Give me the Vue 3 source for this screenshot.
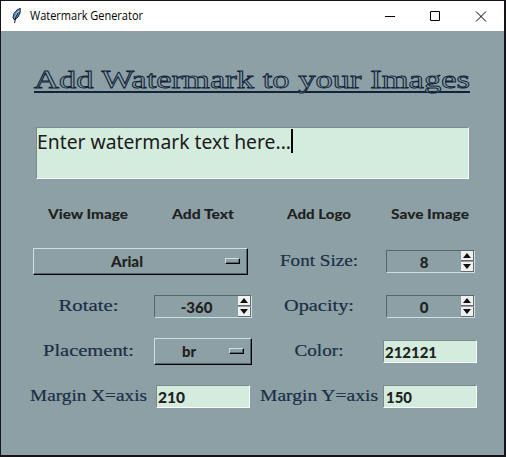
<script setup>
import { ref } from 'vue'

const actions = ref([
  { text: 'View Image', width: 80 },
  { text: 'Add Text', width: 62 },
  { text: 'Add Logo', width: 64 },
  { text: 'Save Image', width: 78 },
])
</script>

<template>
  <main class="window">
    <header class="titlebar">
      <svg class="feather" width="12" height="18" viewBox="0 0 12 18">
        <path d="M3 12.5 2 10.5 3 6.5 6 3 9.3 1.4 9 6 7 10 4 12.6Z" fill="#5b92d8" stroke="#18202b" stroke-width="1" />
        <path d="M8 3.5 5.8 6.8 4.4 10.5" stroke="#c4e0fa" fill="none" />
        <path d="M7.3 5.5 4.6 10.5 3.6 16" stroke="#111" fill="none" />
      </svg>
      <svg class="caption" width="114" height="20"><text x="0" y="14" textLength="113" lengthAdjust="spacingAndGlyphs">Watermark Generator</text></svg>
      <svg class="controls" width="104" height="11" viewBox="0 0 104 11" fill="none" stroke="#000">
        <path d="M0 5.5h10M45.5 .5h9v9h-9zM91 .5l10 10M101 .5l-10 10" />
      </svg>
    </header>

    <section class="body">
      <h1 class="heading">
        <svg width="436" height="34"><text x="0" y="23" textLength="436" lengthAdjust="spacingAndGlyphs">Add Watermark to your Images</text></svg>
      </h1>

      <div class="textbox">
        <svg width="253" height="24"><text x="-1" y="20" textLength="254" lengthAdjust="spacingAndGlyphs">Enter watermark text here...</text></svg>
        <i class="caret"></i>
      </div>

      <div class="grid">
        <button v-for="a in actions" :key="a.text" class="action">
          <svg :width="a.width" height="21"><text x="0" y="13" :textLength="a.width" lengthAdjust="spacingAndGlyphs">{{ a.text }}</text></svg>
        </button>

        <div class="menu wide">
          <svg width="31" height="21"><text x="-1" y="15.5" textLength="32" lengthAdjust="spacingAndGlyphs">Arial</text></svg>
          <i class="indicator"></i>
        </div>
        <svg class="label" width="78" height="21"><text x="0" y="14.5" textLength="78" lengthAdjust="spacingAndGlyphs">Font Size:</text></svg>
        <div class="spin narrow">
          <span class="value">8</span>
          <span class="arrows"><i class="up"></i><i class="down"></i></span>
        </div>

        <svg class="label" width="60" height="21"><text x="-.5" y="14.5" textLength="60" lengthAdjust="spacingAndGlyphs">Rotate:</text></svg>
        <div class="spin">
          <span class="value">-360</span>
          <span class="arrows"><i class="up"></i><i class="down"></i></span>
        </div>
        <svg class="label" width="70" height="21"><text x="0" y="14.5" textLength="70" lengthAdjust="spacingAndGlyphs">Opacity:</text></svg>
        <div class="spin narrow">
          <span class="value">0</span>
          <span class="arrows"><i class="up"></i><i class="down"></i></span>
        </div>

        <svg class="label" width="91" height="21"><text x="0" y="14.5" textLength="91" lengthAdjust="spacingAndGlyphs">Placement:</text></svg>
        <div class="menu">
          <svg width="14" height="21"><text x="0" y="15.5" textLength="14" lengthAdjust="spacingAndGlyphs">br</text></svg>
          <i class="indicator"></i>
        </div>
        <svg class="label" width="49" height="21"><text x="-.5" y="14.5" textLength="49" lengthAdjust="spacingAndGlyphs">Color:</text></svg>
        <div class="entry"><svg width="52" height="20"><text x="-1" y="15.5" textLength="52" lengthAdjust="spacingAndGlyphs">212121</text></svg></div>

        <svg class="label" width="117" height="21"><text x="0" y="14.5" textLength="117" lengthAdjust="spacingAndGlyphs">Margin X=axis</text></svg>
        <div class="entry"><svg width="27" height="20"><text x="-1" y="15.5" textLength="27" lengthAdjust="spacingAndGlyphs">210</text></svg></div>
        <svg class="label" width="118" height="21"><text x="0" y="14.5" textLength="118" lengthAdjust="spacingAndGlyphs">Margin Y=axis</text></svg>
        <div class="entry"><svg width="26" height="20"><text x="0" y="15.5" textLength="26" lengthAdjust="spacingAndGlyphs">150</text></svg></div>
      </div>
    </section>
  </main>
</template>

<style>
body { background: #111; }
</style>

<style scoped>
* { box-sizing: border-box; }
svg { display: block; overflow: visible; flex: none; }
.window {
  width: 506px;
  height: 457px;
  border: solid #151318;
  border-width: 1px 2px 2px 1px;
  background: #8ca0a5;
  font-family: Lato, "Liberation Sans", sans-serif;
}
.titlebar {
  height: 30px;
  padding: 0 17px 0 10px;
  display: flex;
  align-items: center;
  background: #fff;
}
.caption { margin-left: 7px; font: 12px "Open Sans", "Noto Sans", sans-serif; }
.controls { margin-left: auto; margin-right: -2px; }
.body { padding: 34px 0 0 27px; }
.heading {
  width: 436px;
  height: 28px;
  margin: 0 0 0 6px;
  border-bottom: 2px solid #10243a;
  font: 26px "Liberation Serif", serif;
}
.heading svg { fill: #8ca0a5; stroke: #10223a; stroke-width: .85px; }
.textbox {
  display: flex;
  width: 433px;
  height: 52px;
  margin: 34px 0 15px 8px;
  padding: 1px;
  border: 1px solid #fff;
  border-top-color: #798b87;
  border-left-color: #798b87;
  background: #d4ecdd;
  font: 20.5px "Noto Sans", sans-serif;
  fill: #1b1b1b;
}
.caret { width: 2px; height: 24px; background: #000; }
.grid {
  display: grid;
  grid-template-columns: 121px 108px 124px 98px;
  grid-auto-rows: 45px;
  place-items: center;
}
.action {
  padding: 0;
  border: 0;
  background: none;
  font: 900 14px Lato, sans-serif;
  fill: #212121;
}
.action:first-child { margin-right: 1px; }
.label {
  font: 17px "Liberation Serif", serif;
  fill: #1b2e46;
  stroke: #1b2e46;
  stroke-width: .2px;
}
.menu {
  display: flex;
  align-items: center;
  justify-content: space-between;
  width: 98px;
  height: 27px;
  padding: 0 7px 0 27px;
  border: 1px solid #000;
  border-top-color: #c8e2e6;
  border-left-color: #c8e2e6;
  box-shadow: inset -1px -1px #53646a;
  font: 900 15px Lato, sans-serif;
  fill: #212121;
}
.menu.wide {
  grid-column: span 2;
  width: 215px;
  margin-right: 4px;
  padding-left: 78px;
}
.indicator {
  width: 15px;
  height: 6px;
  margin-bottom: 1px;
  border: solid #000;
  border-width: 1px;
  border-top-color: #c8e2e6;
  border-left-color: #c8e2e6;
  box-shadow: inset -1px -1px #53646a;
}
.spin {
  display: flex;
  width: 98px;
  height: 23px;
  border: 1px solid #c8e2e6;
  border-top-color: #56676c;
  border-left-color: #56676c;
}
.spin.narrow { width: 89px; margin-left: 1px; }
.value {
  flex: 1;
  color: #212121;
  font: 900 15px/22px Lato, sans-serif;
  text-align: center;
}
.arrows { display: grid; width: 13px; height: 21px; grid-template-rows: 10px 10px; gap: 1px; }
.arrows i {
  display: grid;
  place-items: center;
  background: #f0f0f0;
  border: solid #696969;
  border-width: 0 1px 1px 0;
}
.arrows i::before {
  content: "";
  width: 8px;
  height: 5px;
  background: #111;
  clip-path: polygon(50% 0, 100% 100%, 0 100%);
}
.arrows .down::before { clip-path: polygon(0 0, 100% 0, 50% 100%); }
.entry {
  width: 94px;
  height: 23px;
  padding: 1px 2px;
  border: 1px solid #fff;
  border-top-color: #798b87;
  border-left-color: #798b87;
  background: #d4ecdd;
  font: 900 15px Lato, sans-serif;
  fill: #212121;
}
</style>
